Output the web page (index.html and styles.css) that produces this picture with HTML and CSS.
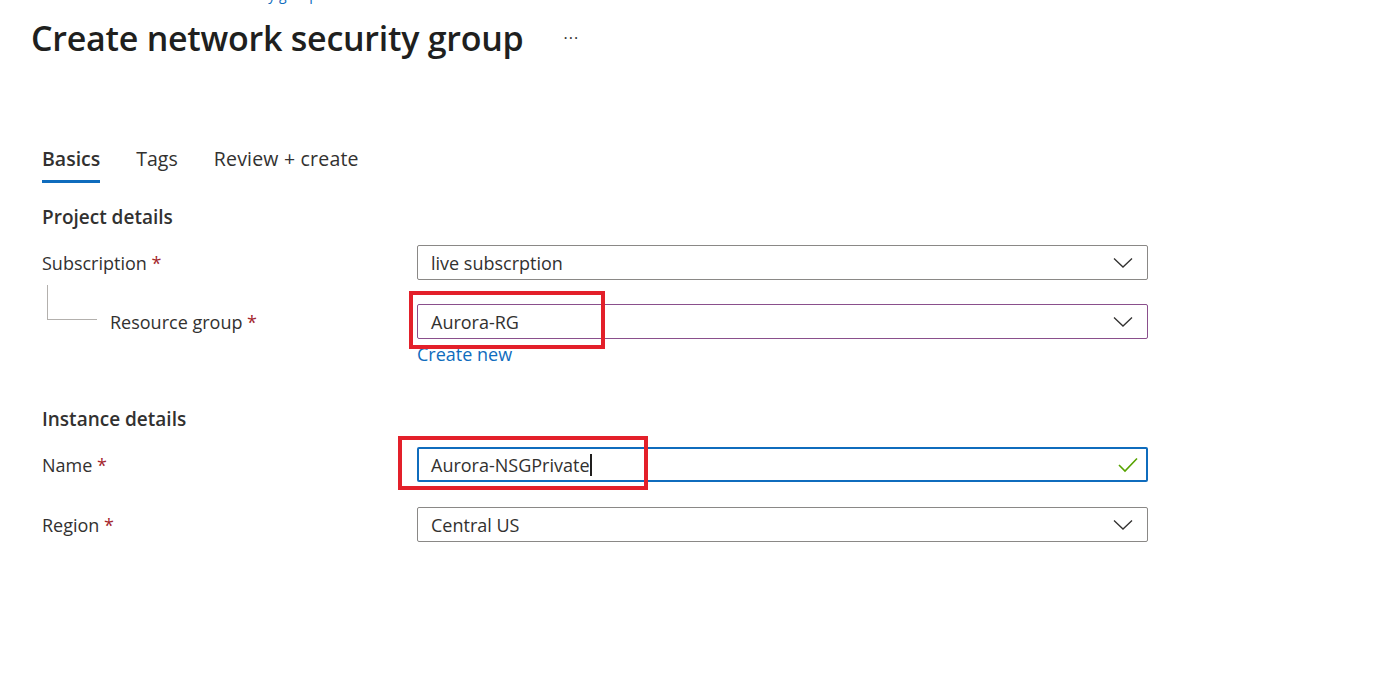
FILE: index.html
```html
<!DOCTYPE html>
<html lang="en">
<head>
<meta charset="utf-8">
<title>Create network security group</title>
<link rel="stylesheet" href="styles.css">
</head>
<body>
<div class="page">
  <div class="crumb"><a>Home</a> &gt; <a>Network security groups</a></div>
  <header class="title-row">
    <h1>Create network security group</h1>
    <span class="more">&middot;&middot;&middot;</span>
  </header>

  <nav class="tabs">
    <a class="tab active">Basics</a>
    <a class="tab">Tags</a>
    <a class="tab">Review + create</a>
  </nav>

  <section class="section">
    <h2>Project details</h2>
    <div class="row">
      <div class="label">Subscription <span class="req">*</span></div>
      <div class="control">
        <div class="field">
          <span class="value">live subscrption</span>
          <svg class="chev" viewBox="0 0 20 12" width="20" height="12"><path d="M1 1.5 L10 10 L19 1.5" fill="none" stroke="#323130" stroke-width="1.3"/></svg>
        </div>
      </div>
    </div>
    <div class="row row-sub">
      <div class="label label-sub"><span class="tree"></span>Resource group <span class="req">*</span></div>
      <div class="control">
        <div class="field field-focus">
          <span class="value">Aurora-RG</span>
          <svg class="chev" viewBox="0 0 20 12" width="20" height="12"><path d="M1 1.5 L10 10 L19 1.5" fill="none" stroke="#323130" stroke-width="1.3"/></svg>
          <span class="mark mark-rg"></span>
        </div>
        <a class="link">Create new</a>
      </div>
    </div>
  </section>

  <section class="section section-2">
    <h2>Instance details</h2>
    <div class="row">
      <div class="label">Name <span class="req">*</span></div>
      <div class="control">
        <div class="field field-active">
          <span class="value">Aurora-NSGPrivate<span class="caret"></span></span>
          <svg class="check" viewBox="0 0 20 16" width="20" height="16"><path d="M1 8 L7 14 L19 1.5" fill="none" stroke="#57a300" stroke-width="1.6"/></svg>
          <span class="mark mark-name"></span>
        </div>
      </div>
    </div>
    <div class="row row-region">
      <div class="label">Region <span class="req">*</span></div>
      <div class="control">
        <div class="field">
          <span class="value">Central US</span>
          <svg class="chev" viewBox="0 0 20 12" width="20" height="12"><path d="M1 1.5 L10 10 L19 1.5" fill="none" stroke="#323130" stroke-width="1.3"/></svg>
        </div>
      </div>
    </div>
  </section>
</div>
</body>
</html>
```

FILE: styles.css
```css
* { box-sizing: border-box; }
html, body { margin: 0; padding: 0; background: #fff; }
body {
  font-family: "Open Sans", "Noto Sans", "Liberation Sans", sans-serif;
  color: #323130;
  overflow: hidden;
}
.page { width: 1399px; height: 676px; }

.crumb {
  margin-top: -15px;
  height: 20px;
  padding-left: 110px;
  font-size: 14px;
  line-height: 20px;
  color: #0f6cbd;
}
.crumb a { color: #0f6cbd; }

.title-row {
  display: flex;
  align-items: center;
  padding-left: 31px;
  height: 48px;
  margin-top: 9px;
}
h1 {
  margin: 0;
  font-size: 34px;
  font-weight: 600;
  color: #201f1e;
  letter-spacing: -0.25px;
  line-height: 44px;
}
.more {
  margin-left: 40px;
  font-size: 16px;
  color: #323130;
  letter-spacing: 1px;
  line-height: 20px;
}

.tabs {
  display: flex;
  gap: 36px;
  padding-left: 42px;
  margin-top: 84px;
}
.tab {
  font-size: 19.5px;
  line-height: 26px;
  padding-bottom: 8px;
  border-bottom: 3px solid transparent;
  color: #323130;
}
.tab:last-child { letter-spacing: 0.2px; }
.tab.active {
  font-weight: 600;
  border-bottom-color: #0f6cbd;
}

.section { padding-left: 42px; }
h2 {
  margin: 0;
  font-size: 19px;
  font-weight: 600;
  line-height: 26px;
  color: #323130;
}
.section h2 { margin-top: 21px; }
.section-2 h2 { margin-top: 41px; }

.row {
  display: flex;
  align-items: flex-start;
  margin-top: 15px;
}
.row-sub { margin-top: 24px; }
.row-region { margin-top: 25px; }

.label {
  width: 375px;
  font-size: 18px;
  line-height: 33px;
  padding-top: 2px;
  height: 35px;
  color: #323130;
  position: relative;
}
.label-sub { padding-left: 68px; }
.req { color: #a4262c; }
.tree {
  position: absolute;
  left: 5px;
  top: -19px;
  width: 50px;
  height: 35px;
  border-left: 1px solid #b3b0ad;
  border-bottom: 1px solid #b3b0ad;
}

.control { width: 731px; }
.field {
  position: relative;
  height: 35px;
  border: 1px solid #8a8886;
  border-radius: 2px;
  display: flex;
  align-items: center;
  justify-content: space-between;
  padding: 0 13px 0 13px;
}
.field-focus { border-color: #8a4f8c; }
.field-active {
  border: 2px solid #0f6cbd;
  padding-left: 12px;
  padding-right: 8px;
}
.value {
  font-size: 18px;
  color: #323130;
  line-height: 24px;
  position: relative;
}
.caret {
  display: inline-block;
  width: 2px;
  height: 22px;
  background: #201f1e;
  vertical-align: -4px;
}
.chev { display: block; margin-right: 1px; }
.check { display: block; }

.link {
  display: block;
  font-size: 18px;
  line-height: 22px;
  color: #0f6cbd;
  margin-top: 4px;
}

.mark {
  position: absolute;
  border: 4px solid #e3202a;
  pointer-events: none;
}
.mark-rg {
  left: -9px;
  top: -14px;
  width: 196px;
  height: 58px;
}
.mark-name {
  left: -21px;
  top: -13px;
  width: 250px;
  height: 54px;
}
```
